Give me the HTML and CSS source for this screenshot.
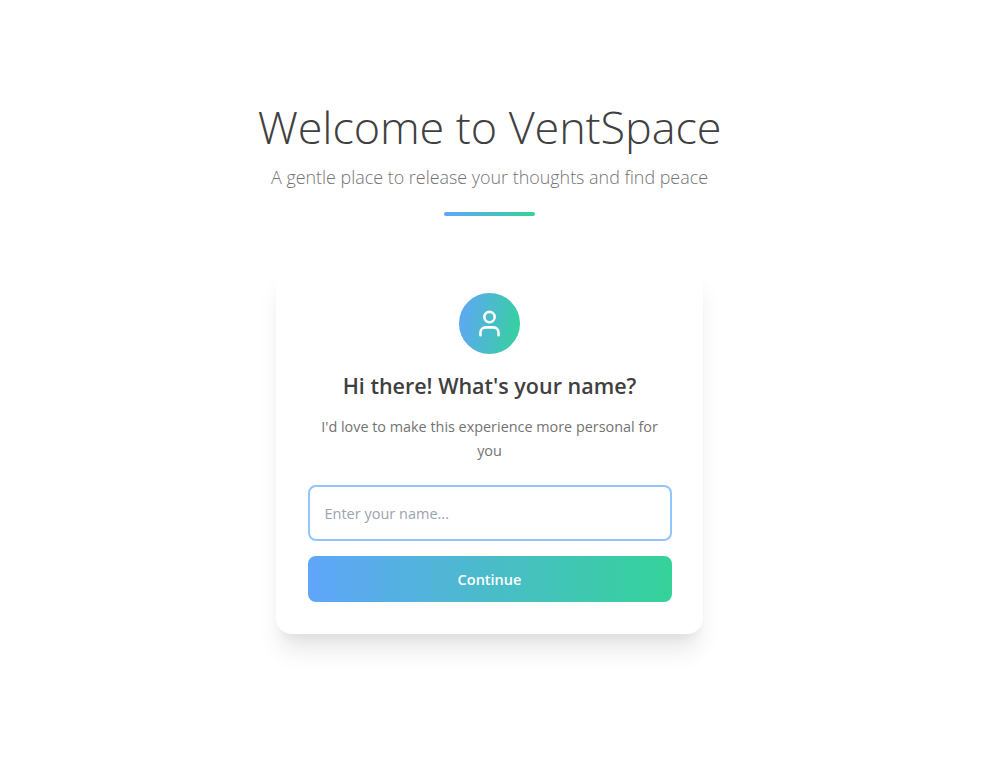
FILE: index.html
```html
<!DOCTYPE html>
<html lang="en">
<head>
<meta charset="utf-8">
<title>VentSpace</title>
<link rel="stylesheet" href="styles.css">
</head>
<body>
<main class="page">
  <header class="hero">
    <h1 class="hero-title">Welcome to VentSpace</h1>
    <p class="hero-subtitle">A gentle place to release your thoughts and find peace</p>
    <div class="hero-bar"></div>
  </header>
  <section class="card">
    <div class="avatar">
      <svg class="avatar-icon" viewBox="0 0 24 24" fill="none" stroke="#fff" stroke-width="2" stroke-linecap="round" stroke-linejoin="round">
        <circle cx="12" cy="7" r="4"/>
        <path d="M19 21v-2a4 4 0 0 0-4-4H9a4 4 0 0 0-4 4v2"/>
      </svg>
    </div>
    <h2 class="card-title">Hi there! What's your name?</h2>
    <p class="card-text">I'd love to make this experience more personal for you</p>
    <input class="name-input" type="text" placeholder="Enter your name...">
    <button class="continue" type="button">Continue</button>
  </section>
</main>
</body>
</html>
```
FILE: styles.css
```css
* { box-sizing: border-box; }
html, body { margin: 0; height: 100%; }
body {
  background: #fff;
  font-family: "Open Sans", "Noto Sans", sans-serif;
  color: #404040;
}
.page {
  display: flex;
  flex-direction: column;
  align-items: center;
  padding: 96px 3px 0 0;
}
.hero { display: flex; flex-direction: column; align-items: center; }
.hero-title {
  margin: 0;
  font-size: 45px;
  line-height: 62px;
  font-weight: 300;
  letter-spacing: -0.1px;
  color: #404040;
}
.hero-subtitle {
  margin: 5px 0 0;
  font-size: 17.9px;
  line-height: 28px;
  font-weight: 300;
  color: #737373;
}
.hero-bar {
  width: 91px;
  height: 4px;
  margin-top: 21px;
  border-radius: 2px;
  background: linear-gradient(90deg, #60a5fa, #34d399);
}
.card {
  width: 427px;
  height: 369px;
  margin-top: 49px;
  padding: 28px 32px 32px;
  display: flex;
  flex-direction: column;
  align-items: center;
  background: #fff;
  border-radius: 16px;
  box-shadow: 0 20px 25px -5px rgba(0, 0, 0, .1), 0 10px 10px -5px rgba(0, 0, 0, .04);
}
.avatar {
  width: 61px;
  height: 61px;
  border-radius: 50%;
  display: flex;
  align-items: center;
  justify-content: center;
  background: linear-gradient(100deg, #60a5fa, #34d399);
}
.avatar-icon { width: 31px; height: 31px; }
.card-title {
  margin: 16px 0 0;
  font-size: 21.5px;
  line-height: 32px;
  font-weight: 600;
  color: #404040;
}
.card-text {
  margin: 13px 0 0;
  font-size: 14.4px;
  line-height: 24px;
  font-weight: 400;
  text-align: center;
  color: #737373;
  width: 340px;
}
.name-input {
  width: 364px;
  height: 57px;
  margin-top: 22px;
  padding: 2px 15px 0;
  border: 2px solid #93c5fd;
  border-radius: 8px;
  background: #fff;
  font: 400 14.5px "Open Sans", sans-serif;
  color: #404040;
  outline: none;
}
.name-input::placeholder { color: #9ca3af; opacity: 1; }
.continue {
  width: 364px;
  height: 46px;
  margin-top: 15px;
  padding: 0;
  border: 0;
  border-radius: 8px;
  background: linear-gradient(90deg, #60a5fa, #34d399);
  color: #fff;
  font: 600 14.5px "Open Sans", sans-serif;
}
```
